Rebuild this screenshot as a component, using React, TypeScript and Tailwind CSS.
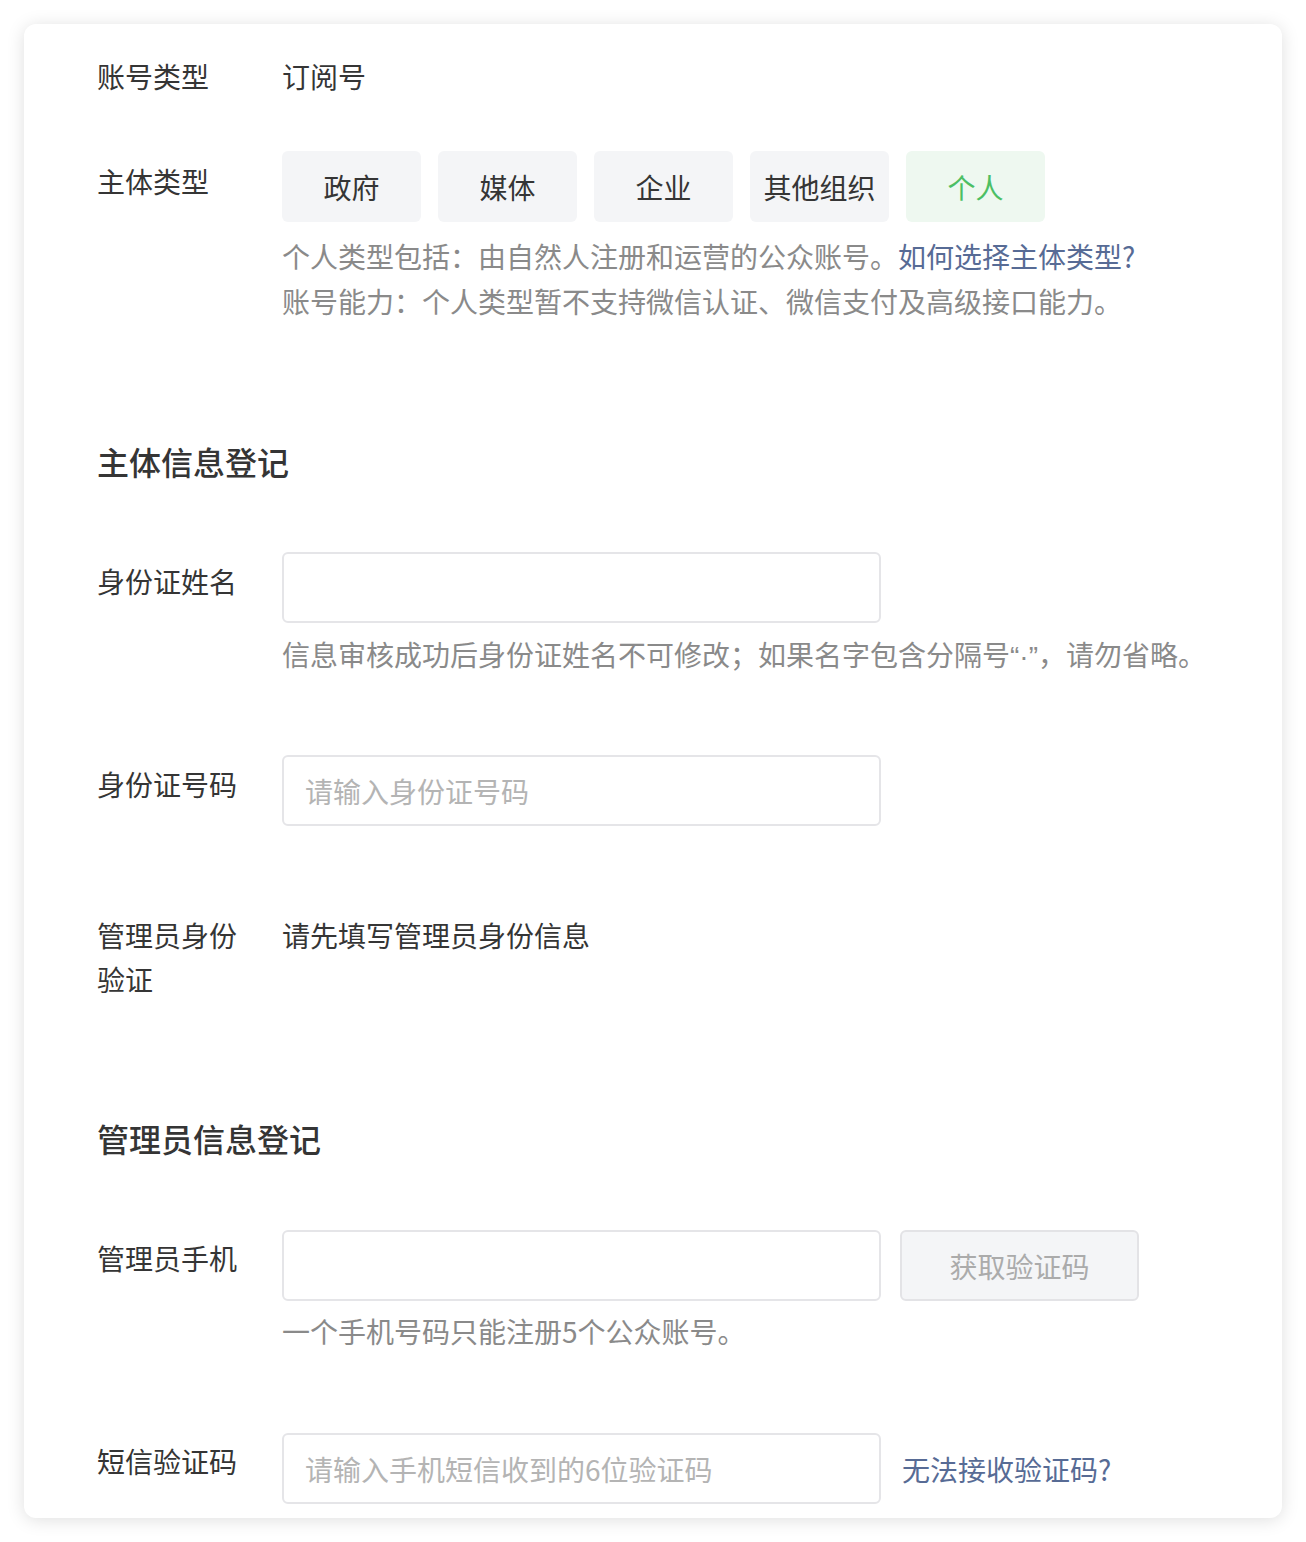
import React from "react";

const font = {
  fontFamily: '"Noto Sans CJK SC", "Noto Sans", sans-serif',
};

const types = ["政府", "媒体", "企业", "其他组织", "个人"];

const Label = ({ children, offset = "mt-0" }: { children: React.ReactNode; offset?: string }) => (
  <div className={`w-[185px] shrink-0 pr-[40px] text-[28px] leading-[44px] text-[#353535] ${offset}`}>
    {children}
  </div>
);

const TextInput = ({ placeholder }: { placeholder?: string }) => (
  <input
    placeholder={placeholder}
    className="h-[71px] w-[599px] rounded-[6px] border-2 border-[#e5e5e8] bg-white px-[21px] text-[28px] text-[#353535] outline-none placeholder:text-[#b4b4b4]"
  />
);

const App = () => {
  return (
    <div className="min-h-[1542px] bg-white pt-[24px] pl-[24px]" style={font}>
      <div className="w-[1258px] rounded-[12px] bg-white pl-[73px] pt-[30px] pb-[14px] shadow-[0_2px_18px_rgba(0,0,0,0.13)]">
        {/* 账号类型 */}
        <div className="flex">
          <Label>账号类型</Label>
          <div className="text-[28px] leading-[44px] text-[#353535]">订阅号</div>
        </div>

        {/* 主体类型 */}
        <div className="mt-[53px] flex">
          <Label offset="mt-[8px]">主体类型</Label>
          <div>
            <div className="flex gap-[17px]">
              {types.map((t) => (
                <button
                  key={t}
                  className={
                    t === "个人"
                      ? "h-[71px] w-[139px] rounded-[6px] bg-[#eef8f0] text-[28px] text-[#4cbf64]"
                      : "h-[71px] w-[139px] rounded-[6px] bg-[#f4f5f7] text-[28px] text-[#353535]"
                  }
                >
                  {t}
                </button>
              ))}
            </div>
            <div className="mt-[12px] text-[28px] leading-[45px] text-[#8a8a8a]">
              <p>
                个人类型包括：由自然人注册和运营的公众账号。
                <span className="text-[#576b95]">如何选择主体类型?</span>
              </p>
              <p>账号能力：个人类型暂不支持微信认证、微信支付及高级接口能力。</p>
            </div>
          </div>
        </div>

        {/* 主体信息登记 */}
        <h2 className="mt-[115px] text-[32px] font-medium leading-[44px] text-[#353535]">主体信息登记</h2>

        <div className="mt-[69px] flex">
          <Label offset="mt-[7px]">身份证姓名</Label>
          <div>
            <TextInput />
            <p className="mt-[9px] text-[28px] leading-[44px] text-[#8a8a8a]">
              信息审核成功后身份证姓名不可修改；如果名字包含分隔号
              <span style={{ fontFamily: '"Liberation Sans", sans-serif' }}>“·”</span>
              ，请勿省略。
            </p>
          </div>
        </div>

        <div className="mt-[76px] flex">
          <Label offset="mt-[7px]">身份证号码</Label>
          <TextInput placeholder="请输入身份证号码" />
        </div>

        <div className="mt-[87px] flex">
          <Label>管理员身份验证</Label>
          <div className="text-[28px] leading-[44px] text-[#353535]">请先填写管理员身份信息</div>
        </div>

        {/* 管理员信息登记 */}
        <h2 className="mt-[115px] text-[32px] font-medium leading-[44px] text-[#353535]">管理员信息登记</h2>

        <div className="mt-[70px] flex">
          <Label offset="mt-[6px]">管理员手机</Label>
          <div>
            <div className="flex">
              <TextInput />
              <button className="ml-[19px] h-[71px] w-[239px] rounded-[6px] border-2 border-[#e3e3e6] bg-[#f4f5f7] text-[28px] text-[#ababab]">
                获取验证码
              </button>
            </div>
            <p className="mt-[8px] text-[28px] leading-[44px] text-[#8a8a8a]">一个手机号码只能注册5个公众账号。</p>
          </div>
        </div>

        <div className="mt-[80px] flex">
          <Label offset="mt-[6px]">短信验证码</Label>
          <div className="flex items-center">
            <TextInput placeholder="请输入手机短信收到的6位验证码" />
            <a className="ml-[21px] mt-[1px] text-[28px] leading-[44px] text-[#576b95]">无法接收验证码?</a>
          </div>
        </div>
      </div>
    </div>
  );
};

export default App;
